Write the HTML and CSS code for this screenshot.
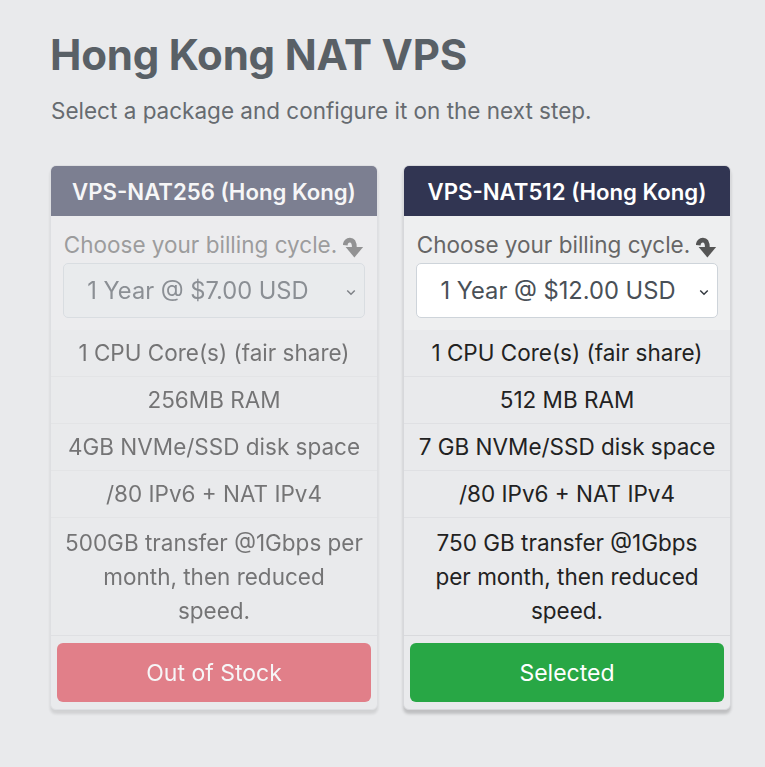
FILE: index.html
```html
<!DOCTYPE html>
<html lang="en">
<head>
<meta charset="utf-8">
<title>Hong Kong NAT VPS</title>
<link rel="stylesheet" href="styles.css">
</head>
<body>
<div class="page">
  <h1 class="title">Hong Kong NAT VPS</h1>
  <p class="subtitle">Select a package and configure it on the next step.</p>
  <div class="cards">
    <div class="card card-disabled">
      <div class="card-header">VPS-NAT256 (Hong Kong)</div>
      <div class="billing">
        <div class="billing-label"><span>Choose your billing cycle.</span>
          <svg class="arrow" viewBox="0 0 24 26" width="21" height="24"><path d="M2.5 11 C3 4, 13 1.5, 13 14" fill="none" stroke="currentColor" stroke-width="5.5"/><polygon points="3,13 23,13 13,25" fill="currentColor"/></svg>
        </div>
        <div class="select select-disabled">1 Year @ $7.00 USD
          <svg class="chev" viewBox="0 0 12 8" width="10" height="7"><polyline points="1.5,1.5 6,6 10.5,1.5" fill="none" stroke="currentColor" stroke-width="1.8"/></svg>
        </div>
      </div>
      <ul class="features">
        <li>1 CPU Core(s) (fair share)</li>
        <li>256MB RAM</li>
        <li>4GB NVMe/SSD disk space</li>
        <li>/80 IPv6 + NAT IPv4</li>
        <li>500GB transfer @1Gbps per<br>month, then reduced<br>speed.</li>
      </ul>
      <div class="card-footer"><div class="btn btn-danger">Out of Stock</div></div>
    </div>
    <div class="card">
      <div class="card-header">VPS-NAT512 (Hong Kong)</div>
      <div class="billing">
        <div class="billing-label"><span>Choose your billing cycle.</span>
          <svg class="arrow" viewBox="0 0 24 26" width="21" height="24"><path d="M2.5 11 C3 4, 13 1.5, 13 14" fill="none" stroke="currentColor" stroke-width="5.5"/><polygon points="3,13 23,13 13,25" fill="currentColor"/></svg>
        </div>
        <div class="select">1 Year @ $12.00 USD
          <svg class="chev" viewBox="0 0 12 8" width="10" height="7"><polyline points="1.5,1.5 6,6 10.5,1.5" fill="none" stroke="currentColor" stroke-width="1.8"/></svg>
        </div>
      </div>
      <ul class="features">
        <li>1 CPU Core(s) (fair share)</li>
        <li>512 MB RAM</li>
        <li>7 GB NVMe/SSD disk space</li>
        <li>/80 IPv6 + NAT IPv4</li>
        <li>750 GB transfer @1Gbps<br>per month, then reduced<br>speed.</li>
      </ul>
      <div class="card-footer"><div class="btn btn-success">Selected</div></div>
    </div>
  </div>
</div>
</body>
</html>
```

FILE: styles.css
```css
* { box-sizing: border-box; }
html, body { margin: 0; padding: 0; }
body {
  background: #e9eaec;
  font-family: Inter, "Noto Sans", "Liberation Sans", sans-serif;
  color: #222;
}
.page { padding: 30px 34px 40px 50px; }
.title {
  margin: 0;
  font-size: 42px;
  line-height: 50px;
  font-weight: 700;
  color: #596066;
  letter-spacing: -0.2px;
}
.subtitle {
  margin: 15px 0 0 1px;
  font-size: 22.5px;
  line-height: 32px;
  color: #666b70;
}
.cards {
  margin-top: 38px;
  display: grid;
  grid-template-columns: 328px 328px;
  column-gap: 25px;
}
.card {
  border: 1px solid #d7d8db;
  border-radius: 6px;
  overflow: hidden;
  background: #e9eaec;
  box-shadow: 0 4px 3px rgba(0,0,0,0.18);
}
.card-disabled { opacity: 0.59; }
.card-header {
  background: #313552;
  color: #fff;
  height: 50px;
  display: flex;
  align-items: center;
  justify-content: center;
  font-size: 22.2px;
  font-weight: 600;
}
.billing {
  background: #eeeff0;
  padding: 14px 12px 12px;
}
.billing-label {
  font-size: 22.5px;
  line-height: 30px;
  color: #666;
  display: flex;
  flex-wrap: nowrap;
  white-space: nowrap;
  justify-content: center;
  align-items: center;
  gap: 6px;
}
.billing-label span { flex-shrink: 0; }
.arrow { color: #555; margin-top: 3px; flex-shrink: 0; }
.select {
  margin-top: 3px;
  height: 55px;
  background: #fff;
  border: 1px solid #ced4da;
  border-radius: 5px;
  display: flex;
  align-items: center;
  justify-content: center;
  font-size: 23.7px;
  color: #495057;
  position: relative;
  padding-right: 18px;
}
.select-disabled { background: #e9ecef; padding-right: 32px; }
.chev { position: absolute; right: 8px; top: 25px; color: #343a40; }
.features {
  list-style: none;
  margin: 0;
  padding: 0;
}
.features li {
  text-align: center;
  font-size: 22.5px;
  line-height: 34px;
  padding: 6px 8px 6px;
  border-top: 1px solid #dfe0e3;
  color: #222;
  white-space: nowrap;
}
.features li:first-child { border-top: none; }
.features li:last-child { padding-top: 8px; padding-bottom: 7px; }
.card-footer {
  border-top: 1px solid #d9dadd;
  padding: 7px 6px 7px;
}
.btn {
  height: 59px;
  border-radius: 6px;
  display: flex;
  align-items: center;
  justify-content: center;
  font-size: 23px;
  color: #fff;
}
.btn-danger { background: #dc3545; }
.btn-success { background: #28a745; }
```
